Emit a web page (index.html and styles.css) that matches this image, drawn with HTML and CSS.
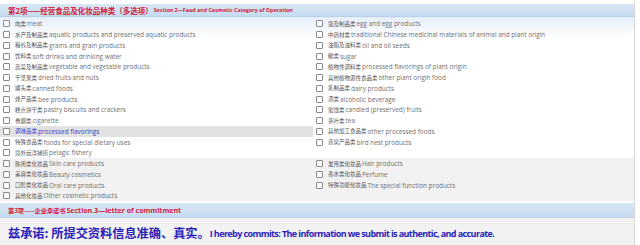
FILE: index.html
```html
<!DOCTYPE html>
<html lang="en">
<head>
  <meta charset="UTF-8">
  <title>Section 2</title>
  <link rel="stylesheet" href="styles.css">
</head>
<body>
  <div id="container-form">
    <div class="section-head">
      <span class="head-cn">第2项——经营食品及化妆品种类（多选项）</span><span class="head-en">Section 2—Food and Cosmetic Category of Operation</span>
    </div>

    <div class="group group-food">
      <div class="item"><span class="box"></span><span class="cn">肉类</span> meat</div>
      <div class="item"><span class="box"></span><span class="cn">蛋及制品类</span> egg and egg products</div>
      <div class="item"><span class="box"></span><span class="cn">水产及制品类</span> aquatic products and preserved aquatic products</div>
      <div class="item"><span class="box"></span><span class="cn">中药材类</span> traditional Chinese medicinal materials of animal and plant origin</div>
      <div class="item"><span class="box"></span><span class="cn">粮谷及制品类</span> grains and grain products</div>
      <div class="item"><span class="box"></span><span class="cn">油脂及油料类</span> oil and oil seeds</div>
      <div class="item"><span class="box"></span><span class="cn">饮料类</span> soft drinks and drinking water</div>
      <div class="item"><span class="box"></span><span class="cn">糖类</span> sugar</div>
      <div class="item"><span class="box"></span><span class="cn">蔬菜及制品类</span> vegetable and vegetable products</div>
      <div class="item"><span class="box"></span><span class="cn">植物性调料类</span> processed flavorings of plant origin</div>
      <div class="item"><span class="box"></span><span class="cn">干坚果类</span> dried fruits and nuts</div>
      <div class="item"><span class="box"></span><span class="cn">其他植物源性食品类</span> other plant origin food</div>
      <div class="item"><span class="box"></span><span class="cn">罐头类</span> canned foods</div>
      <div class="item"><span class="box"></span><span class="cn">乳制品类</span> dairy products</div>
      <div class="item"><span class="box"></span><span class="cn">蜂产品类</span> bee products</div>
      <div class="item"><span class="box"></span><span class="cn">酒类</span> alcoholic beverage</div>
      <div class="item"><span class="box"></span><span class="cn">糕点饼干类</span> pastry biscuits and crackers</div>
      <div class="item"><span class="box"></span><span class="cn">蜜饯类</span> candied (preserved) fruits</div>
      <div class="item"><span class="box"></span><span class="cn">卷烟类</span> cigarette</div>
      <div class="item"><span class="box"></span><span class="cn">茶叶类</span> tea</div>
      <div class="item item-hover"><span class="box"></span><span class="cn">调味品类</span> processed flavorings</div>
      <div class="item"><span class="box"></span><span class="cn">其他加工食品类</span> other processed foods</div>
      <div class="item"><span class="box"></span><span class="cn">特殊食品类</span> foods for special dietary uses</div>
      <div class="item"><span class="box"></span><span class="cn">燕窝产品类</span> bird nest products</div>
      <div class="item"><span class="box"></span><span class="cn">境外远洋捕捞</span> pelagic fishery</div>
      <div class="item"></div>
    </div>

    <div class="group group-cosmetic">
      <div class="item"><span class="box"></span><span class="cn">肤用类化妆品</span> Skin care products</div>
      <div class="item"><span class="box"></span><span class="cn">发用类化妆品</span> Hair products</div>
      <div class="item"><span class="box"></span><span class="cn">美容类化妆品</span> Beauty cosmetics</div>
      <div class="item"><span class="box"></span><span class="cn">香水类化妆品</span> Perfume</div>
      <div class="item"><span class="box"></span><span class="cn">口腔类化妆品</span> Oral care products</div>
      <div class="item"><span class="box"></span><span class="cn">特殊功能化妆品</span> The special function products</div>
      <div class="item"><span class="box"></span><span class="cn">其他化妆品</span> Other cosmetic products</div>
      <div class="item"></div>
    </div>

    <div class="section-head section-head-3">
      <span class="head-cn">第3项——企业承诺书</span><span class="head-en">Section.3—letter of commitment</span>
    </div>

    <div class="commitment">
      <span class="commit-cn">兹承诺: 所提交资料信息准确、真实。</span><span class="commit-en">I hereby commits: The information we submit is authentic, and accurate.</span>
    </div>
  </div>
</body>
</html>
```

FILE: styles.css
```css
body {
  margin: 0;
  background-color: #fff;
  font-family: "Open Sans", "Noto Sans CJK SC", sans-serif;
}

#container-form {
  width: 634px;
  height: 245px;
  border-right: 1px solid #d8d8d8;
  background-color: #fff;
  overflow: hidden;
}

.section-head {
  height: 12px;
  margin-top: 4px;
  padding-left: 8px;
  background: linear-gradient(#d9e7f6, #c6dcf1);
  border-bottom: 1px solid #b9d0ea;
  display: flex;
  align-items: center;
  color: #d2223c;
  font-weight: 700;
  white-space: nowrap;
}

.head-cn {
  font-family: "Noto Sans CJK SC", sans-serif;
  font-size: 7.5px;
}

.head-en {
  font-size: 5.3px;
  margin-left: 1px;
}

.group {
  display: grid;
  grid-template-columns: 313px 1fr;
  grid-auto-rows: 10.75px;
}

.group-food {
  padding-top: 1.5px;
  background: linear-gradient(#e6effa, #fff 22px);
}

.group-cosmetic {
  background-color: #f2f2f2;
}

.item {
  display: flex;
  align-items: center;
  padding-left: 3px;
  font-size: 6.4px;
  color: #707070;
  white-space: nowrap;
}

.item-hover {
  background-color: #e2e2e2;
  color: #3a3ad0;
}

.box {
  width: 5px;
  height: 5px;
  border: 1px solid #8a8a8a;
  border-radius: 1px;
  background-color: #fff;
  margin-right: 5px;
  flex: none;
}

.cn {
  font-family: "Noto Sans CJK SC", sans-serif;
  font-size: 5.5px;
  color: #555;
  margin-right: 1px;
}

.item-hover .cn {
  color: #3a3ad0;
}

.section-head-3 {
  height: 14px;
  margin-top: 1px;
  border-top: 1px solid #fff;
}

.section-head-3 .head-cn {
  font-size: 6.2px;
}

.section-head-3 .head-en {
  font-size: 7px;
}

.commitment {
  height: 30px;
  padding-left: 8px;
  background-color: #f2f2f2;
  color: #2a22b8;
  font-weight: 700;
  display: flex;
  align-items: center;
  white-space: nowrap;
}

.commit-cn {
  font-family: "Noto Sans CJK SC", sans-serif;
  font-size: 12.2px;
}

.commit-en {
  font-size: 9px;
  letter-spacing: -0.6px;
}
```
